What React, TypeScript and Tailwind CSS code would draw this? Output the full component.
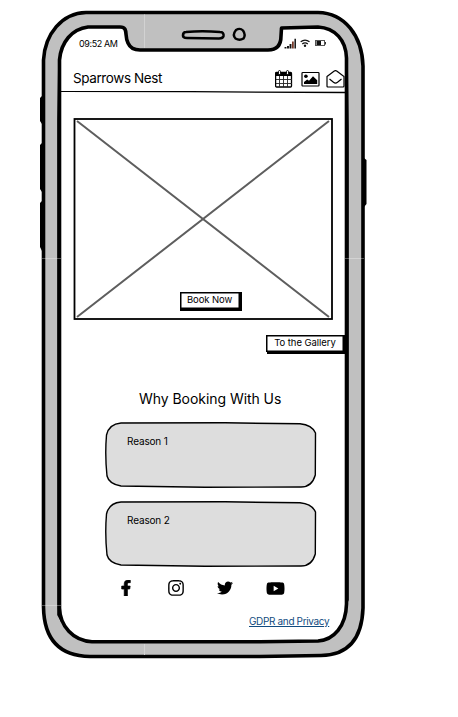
import React from "react";
import { FaFacebookF, FaInstagram, FaTwitter, FaYoutube } from "react-icons/fa";

function PhoneFrame() {
  return (
    <svg className="absolute left-0 top-0" width="458" height="717" viewBox="0 0 458 717" fill="none" aria-hidden="true">
      <g fill="#000">
        <path d="M42 96 L40 98 V121 L42 124Z M42 143 L40 145 V189 L42 192Z M42 201 L40 203 V247 L42 251Z" />
        <path d="M364 158 L366.5 160 V204 L364 207Z" />
      </g>
      <path
        d="M86 12.5 H318 C345 13 362 36 363 66 V608 C362 637 350 655 321 655.5 L260 656.5 H90 C60 656 44 640 43.5 607 L43.5 60 C45 34 62 13 86 12.5Z"
        fill="#c0c0c0"
        stroke="#000"
        strokeWidth="3.6"
      />
      <path
        d="M88 27 H120 C129 27 124 36 128 43 Q131 50 140 50 H268 C277 50 281 45 281 36 L281.500 28 L318 27 C335 28 346 40 346.500 58 V604 C346 626 334 640 318 641 L260 641.700 H92 C73 641 60 626 59.500 608 L59.500 60 C61 42 72 29 88 27Z"
        fill="#fff"
        stroke="#000"
        strokeWidth="3.6"
        strokeLinejoin="round"
      />
      <path d="M58 70 L57.200 120 V615 L61 622 V70Z M348 70 L348.800 130 V600 L345.500 608 V70Z" fill="#000" />
      <path d="M186 32 Q202 30.500 220 32 Q224 32 223.500 36 Q223 38.500 219 38.500 L187 38 Q183 38 183 35.500 Q183 32 186 32Z" stroke="#000" strokeWidth="2.600" />
      <path d="M236 30 Q240 27.500 243 30.500 Q246 35 243.500 38.500 Q239.500 41 235.500 38.500 Q232 35 236 30Z" stroke="#000" strokeWidth="2.400" />
      <path d="M144.500 14.500 V48 M144.500 644 V655" stroke="#d2d2d2" />
      <path d="M42 258.500 H61 M345 258.500 H364 M42 605.500 H61" stroke="#fff" strokeOpacity=".3" />
    </svg>
  );
}

function StatusIcons() {
  return (
    <svg width="42" height="12" viewBox="0 0 42 12" fill="none" aria-hidden="true">
      <path d="M1.500 9 V10.500 M4 8 V10.500 M6.500 6 V10.500" stroke="#111" strokeWidth="1.900" />
      <path d="M8.900 3.500 V10.500" stroke="#703020" strokeWidth="1.700" />
      <path d="M11.200 0.800 V10.500" stroke="#111" strokeWidth="1.500" />
      <path d="M16.700 3.800 Q21 .3 25.500 3.800 M18.300 6 Q21 3.700 23.800 6" stroke="#111" strokeWidth="1.300" />
      <circle cx="21" cy="7.800" r="1.200" fill="#111" />
      <rect x="31.500" y="2.500" width="9" height="5" stroke="#555" />
      <path d="M32.500 3H37V7H32.500Z" fill="#111" />
      <path d="M41.500 4V6.500" stroke="#333" />
    </svg>
  );
}

function CalendarIcon() {
  return (
    <svg width="18" height="18" viewBox="0 0 18 18" fill="none" aria-hidden="true">
      <path d="M.500 3 Q.500 2 1.500 2 H15.500 Q16.500 2 16.500 3 V6 H.500Z" fill="#000" />
      <rect x=".600" y="2.500" width="15.900" height="14.500" rx="1" stroke="#000" strokeWidth="1.300" />
      <path d="M4.500 6V17 M8.500 6V17 M12.500 6V17 M1 9.500H17 M1 13.500H17" stroke="#222" strokeWidth=".9" />
      <rect x="3.500" y=".5" width="2" height="4" rx="1" fill="#fff" stroke="#000" strokeWidth=".9" />
      <rect x="11.500" y=".5" width="2" height="4" rx="1" fill="#fff" stroke="#000" strokeWidth=".9" />
    </svg>
  );
}

function PictureIcon() {
  return (
    <svg width="19" height="16" viewBox="0 0 19 16" fill="none" aria-hidden="true">
      <rect x="1" y="1.500" width="17" height="13.500" rx=".8" stroke="#000" strokeWidth="1.200" />
      <circle cx="4.900" cy="5.200" r="1.800" fill="#000" />
      <path d="M3 13 V11 L6.200 8.500 L8 9.700 L12 5.200 L16.200 9.300 V13Z" fill="#000" />
    </svg>
  );
}

function EnvelopeIcon() {
  return (
    <svg width="19" height="18" viewBox="0 0 19 18" fill="none" stroke="#000" strokeWidth="1.200" aria-hidden="true">
      <path d="M1 6.500 L8.300 1 Q9.500 .2 10.700 1 L18 6.500 V16 Q18 17 17 17 H2 Q1 17 1 16Z" />
      <path d="M3.500 9 L7.500 12.300 Q9.500 13.800 11.500 12.300 L15.500 9" />
    </svg>
  );
}

function SketchButton({ label, className, textClassName }: { label: string; className: string; textClassName: string }) {
  return (
    <button className={`flex items-center justify-center border border-black bg-white ${className}`}>
      <span className={`whitespace-nowrap ${textClassName}`}>{label}</span>
    </button>
  );
}

function ReasonCard({ label }: { label: string }) {
  return (
    <div className="relative h-[66px] w-[212px]">
      <svg className="absolute inset-0" width="212" height="66" viewBox="0 0 212 66" aria-hidden="true">
        <path
          d="M16 1 L120 .8 L195 1.800 Q207 3 210.500 11 L210.300 53 Q207 65 196 65 L100 65.200 L16 64 Q4 62 2 54 Q-.2 33 1.500 13 Q4 2 16 1Z"
          fill="#ddd"
          stroke="#000"
          strokeWidth="1.400"
        />
      </svg>
      <p className="relative pl-[22px] pt-[11px] text-[10px] leading-[16px] tracking-[-0.15px]">{label}</p>
    </div>
  );
}

export default function App() {
  return (
    <div className="relative h-[717px] w-[458px] overflow-hidden bg-white font-['Inter','Liberation_Sans',sans-serif] text-black">
      <PhoneFrame />
      <main className="relative ml-[61px] flex w-[285px] flex-col pt-[36px]">
        <div className="flex h-4 items-center justify-between pl-[18px] pr-[20px]">
          <span className="whitespace-nowrap text-[9px] leading-4 tracking-[-0.4px]">09:52 AM</span>
          <StatusIcons />
        </div>
        <header className="flex h-[39px] items-center justify-between pl-[12px] pr-px pt-[13px]">
          <h1 className="whitespace-nowrap text-[13.500px] leading-5 tracking-[-0.4px]">Sparrows Nest</h1>
          <nav className="flex items-center pt-px">
            <CalendarIcon />
            <span className="ml-[8px]"><PictureIcon /></span>
            <span className="ml-[6px]"><EnvelopeIcon /></span>
          </nav>
        </header>
        <svg width="285" height="3" viewBox="0 0 285 3" aria-hidden="true">
          <path d="M0 .3 L130 .7 L285 1.500" stroke="#000" strokeWidth="1.300" />
        </svg>
        <section className="relative ml-[12px] mt-[24px] flex h-[202px] w-[260px] flex-col items-center justify-end pb-[11px]">
          <svg className="absolute inset-0" width="260" height="202" viewBox="0 0 260 202" fill="none" aria-hidden="true">
            <path d="M4 3 L256 199 M4 199 L256 3" stroke="#5e5e5e" strokeWidth="2" />
            <rect x="1.500" y="1" width="257.500" height="200" stroke="#000" strokeWidth="1.800" />
          </svg>
          <SketchButton label="Book Now" className="relative ml-[13px] h-[17px] w-[60px] shadow-[inset_0_0_0_0.5px_#000,1px_1px_0_1px_#000]" textClassName="text-[9.500px] tracking-[-0.1px]" />
        </section>
        <SketchButton label="To the Gallery" className="ml-[205px] mt-[15px] h-[17px] w-[78px] shadow-[inset_0_0_0_0.5px_#000,2px_1px_0_1px_#000]" textClassName="text-[9.500px] tracking-[-0.05px]" />
        <h2 className="ml-[78px] mt-[36px] whitespace-nowrap text-[14px] leading-[22px] tracking-[-0.05px]">Why Booking With Us</h2>
        <section className="ml-[44px] mt-[12px] flex flex-col gap-[13px]">
          <ReasonCard label="Reason 1" />
          <ReasonCard label="Reason 2" />
        </section>
        <nav className="ml-[57px] mt-[11px] flex h-[20px] items-center">
          <FaFacebookF size={16} stroke="#000" strokeWidth={24} />
          <FaInstagram className="ml-[33px]" size={18} />
          <FaTwitter className="ml-[32px]" size={16} />
          <FaYoutube className="ml-[33px]" size={19} />
        </nav>
        <a href="#privacy" className="ml-[188px] mt-[15px] self-start whitespace-nowrap text-[10px] leading-4 tracking-[-0.35px] text-[#114b80] underline underline-offset-1">GDPR and Privacy</a>
      </main>
    </div>
  );
}
